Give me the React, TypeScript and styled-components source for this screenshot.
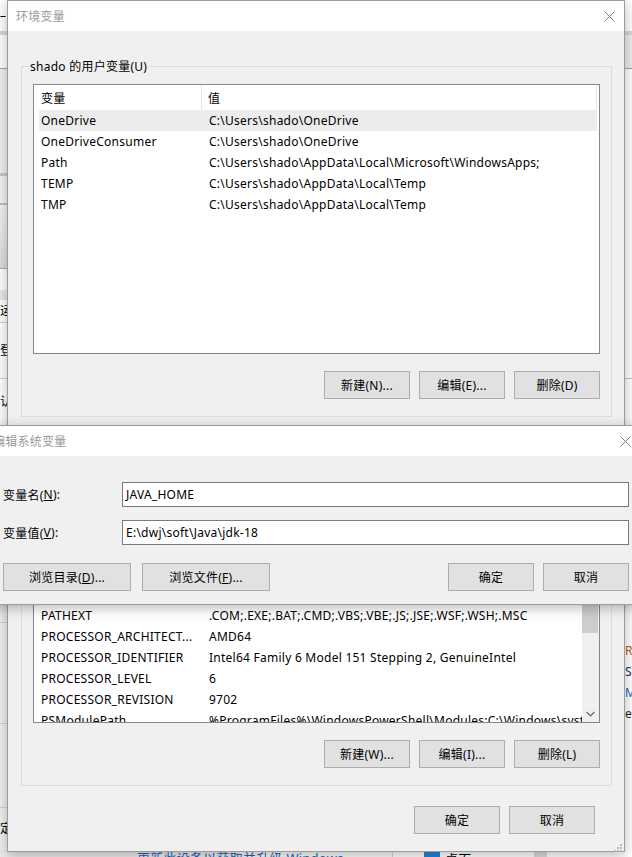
import React from "react";
import styled, { createGlobalStyle } from "styled-components";

const uiFont = `"Segoe UI", "Noto Sans", "Noto Sans CJK SC", sans-serif`;

const GlobalStyle = createGlobalStyle`
  html, body { margin: 0; padding: 0; }
  body {
    font-family: ${uiFont};
    font-size: 12px;
    letter-spacing: 0.25px;
    color: #000;
    background: #fff;
  }
  * { box-sizing: border-box; }
`;

const Desktop = styled.div`
  position: relative;
  width: 632px;
  height: 857px;
  overflow: hidden;
  background: #fff;
`;

/* the window behind both dialogs, only its edges show */
const BackWindow = styled.div`
  position: absolute;
  inset: 0;
  display: grid;
  grid-template-columns: 8px 1fr 8px;
  grid-template-rows: 1fr 8px;
  background: #f0f0f0;
`;

const EdgeColumn = styled.div`
  display: flex;
  flex-direction: column;
  overflow: hidden;
  background: #fff;
`;

const Band = styled.div<{ $h: number; $bg: string; $color?: string; $shift?: number }>`
  flex: 0 0 ${(p) => p.$h}px;
  display: flex;
  align-items: center;
  padding-left: ${(p) => p.$shift ?? 0}px;
  background: ${(p) => p.$bg};
  color: ${(p) => p.$color || "#000"};
  white-space: nowrap;
  font-size: 12px;
  line-height: 1;
`;

const BottomStrip = styled.div`
  grid-column: 1 / -1;
  display: flex;
  overflow: hidden;
  background: #fff;
`;

const StripLink = styled.div`
  flex: 0 0 393px;
  padding: 2px 0 0 137px;
  background: linear-gradient(to right, #ebebeb 240px, #fafafa 240px);
  border-right: 1px solid #d4d4d4;
  color: #1a66c2;
  font-size: 13px;
  line-height: 14px;
  white-space: nowrap;
  overflow: hidden;
`;

const StripNav = styled.div`
  flex: 0 0 141px;
  display: flex;
  gap: 5px;
  padding: 3px 0 0 31px;
  font-size: 13px;
  line-height: 14px;
  white-space: nowrap;
`;

const NavIcon = styled.span`
  flex: 0 0 16px;
  height: 16px;
  background: #1e86dc;
`;

const StripScroll = styled.div`
  flex: 0 0 13px;
  background: #dadada;
`;

/* dialog windows */
const Window = styled.div`
  position: absolute;
  display: flex;
  flex-direction: column;
  background: #f0f0f0;
  border: 1px solid #9c9c9c;
  box-shadow: 0 3px 12px rgba(0, 0, 0, 0.28);
`;

const EnvWindow = styled(Window)`
  left: 7px;
  top: 0;
  width: 618px;
  height: 852px;
`;

const EditWindow = styled(Window)`
  left: -13px;
  top: 425px;
  width: 654px;
  height: 180px;
`;

const TitleBar = styled.div<{ $pad?: number }>`
  flex: 0 0 30px;
  display: flex;
  align-items: center;
  justify-content: space-between;
  padding-left: ${(p) => p.$pad ?? 8}px;
  background: #fff;
`;

const TitleText = styled.span`
  color: #9a9a9a;
  font-size: 12px;
`;

const CloseButton = styled.div`
  width: 29px;
  height: 30px;
  display: flex;
  align-items: center;
  justify-content: center;
`;

const EnvBody = styled.div`
  flex: 1;
  display: flex;
  flex-direction: column;
  padding: 35px 12px 0 13px;
`;

const GroupBox = styled.div<{ $gap?: number }>`
  position: relative;
  display: flex;
  flex-direction: column;
  margin-top: ${(p) => p.$gap ?? 0}px;
  padding: 17px 11px 17px 11px;
  border: 1px solid #dcdcdc;
`;

const GroupLabel = styled.span`
  position: absolute;
  top: -8px;
  left: 7px;
  padding: 0 1px;
  background: #f0f0f0;
  line-height: 15px;
`;

const ListView = styled.div`
  position: relative;
  height: 270px;
  border: 1px solid #828790;
  background: #fff;
  overflow: hidden;
`;

const ListHeader = styled.div`
  display: grid;
  grid-template-columns: 168px 1fr;
  height: 25px;
  margin-right: 2px;
  border-right: 1px solid #e5e5e5;
`;

const HeaderCell = styled.div<{ $divider?: boolean }>`
  display: flex;
  align-items: center;
  padding-left: ${(p) => (p.$divider ? 7 : 6)}px;
  border-right: ${(p) => (p.$divider ? "1px solid #e5e5e5" : "none")};
`;

const Row = styled.div<{ $selected?: boolean }>`
  display: grid;
  grid-template-columns: 163px 1fr;
  height: 21px;
  margin: 0 2px 0 5px;
  background: ${(p) => (p.$selected ? "#ececec" : "transparent")};
  white-space: nowrap;
`;

const Cell = styled.div<{ $value?: boolean }>`
  display: flex;
  align-items: center;
  padding-left: ${(p) => (p.$value ? 7 : 2)}px;
  overflow: hidden;
`;

const ScrollBar = styled.div`
  position: absolute;
  top: 0;
  right: 0;
  bottom: 0;
  width: 17px;
  display: flex;
  flex-direction: column;
  justify-content: space-between;
  background: #f0f0f0;
`;

const ScrollThumb = styled.div`
  margin: 17px 1px 0 0;
  height: 162px;
  background: #cdcdcd;
`;

const ScrollArrow = styled.div`
  height: 17px;
  display: flex;
  align-items: center;
  justify-content: center;
`;

const ButtonRow = styled.div<{ $top: number; $right?: number }>`
  display: flex;
  justify-content: flex-end;
  gap: 9px;
  margin-top: ${(p) => p.$top}px;
  padding-right: ${(p) => p.$right ?? 0}px;
`;

const Button = styled.button<{ $w?: number }>`
  width: ${(p) => p.$w ?? 86}px;
  height: 28px;
  padding: 0;
  border: 1px solid #adadad;
  background: #e1e1e1;
  font-family: ${uiFont};
  font-size: 12px;
  letter-spacing: 0.25px;
  color: #000;
`;

const Grip = styled.div`
  position: absolute;
  right: 2px;
  bottom: 2px;
  width: 10px;
  height: 10px;
`;

const EditBody = styled.div`
  flex: 1;
  display: flex;
  flex-direction: column;
  padding: 26px 11px 0 15px;
`;

const FieldGrid = styled.div`
  display: grid;
  grid-template-columns: 119px 1fr;
  row-gap: 13px;
`;

const FieldLabel = styled.label`
  display: flex;
  align-items: center;
  height: 25px;
`;

const TextBox = styled.div`
  display: flex;
  align-items: center;
  height: 25px;
  padding-left: 3px;
  border: 1px solid #7a7a7a;
  background: #fff;
`;

const EditActions = styled.div`
  display: flex;
  justify-content: space-between;
  margin-top: 18px;
`;

const ActionGroup = styled.div<{ $gap: number }>`
  display: flex;
  gap: ${(p) => p.$gap}px;
`;

const CloseIcon = () => (
  <svg width="11" height="11" viewBox="0 0 11 11">
    <path d="M0.5 0.5 L10.5 10.5 M10.5 0.5 L0.5 10.5" stroke="#7d7d7d" strokeWidth="1" fill="none" />
  </svg>
);

const ChevronDown = () => (
  <svg width="9" height="6" viewBox="0 0 9 6">
    <path d="M0.5 0.8 L4.5 4.8 L8.5 0.8" stroke="#606060" strokeWidth="1.2" fill="none" />
  </svg>
);

const GripDots = () => (
  <svg width="10" height="10" viewBox="0 0 10 10" fill="#b8b8b8">
    <rect x="8" y="2" width="2" height="2" />
    <rect x="5" y="5" width="2" height="2" />
    <rect x="8" y="5" width="2" height="2" />
    <rect x="2" y="8" width="2" height="2" />
    <rect x="5" y="8" width="2" height="2" />
    <rect x="8" y="8" width="2" height="2" />
  </svg>
);

const userVars = [
  ["OneDrive", "C:\\Users\\shado\\OneDrive"],
  ["OneDriveConsumer", "C:\\Users\\shado\\OneDrive"],
  ["Path", "C:\\Users\\shado\\AppData\\Local\\Microsoft\\WindowsApps;"],
  ["TEMP", "C:\\Users\\shado\\AppData\\Local\\Temp"],
  ["TMP", "C:\\Users\\shado\\AppData\\Local\\Temp"],
];

const systemVars = [
  ["ComSpec", "C:\\Windows\\system32\\cmd.exe"],
  ["DriverData", "C:\\Windows\\System32\\Drivers\\DriverData"],
  ["JAVA_HOME", "E:\\dwj\\soft\\Java\\jdk-18"],
  ["NUMBER_OF_PROCESSORS", "20"],
  ["OS", "Windows_NT"],
  ["Path", "C:\\Windows\\system32;C:\\Windows;C:\\Windows\\System32\\Wbem"],
  ["PATHEXT", ".COM;.EXE;.BAT;.CMD;.VBS;.VBE;.JS;.JSE;.WSF;.WSH;.MSC"],
  ["PROCESSOR_ARCHITECT...", "AMD64"],
  ["PROCESSOR_IDENTIFIER", "Intel64 Family 6 Model 151 Stepping 2, GenuineIntel"],
  ["PROCESSOR_LEVEL", "6"],
  ["PROCESSOR_REVISION", "9702"],
  ["PSModulePath", "%ProgramFiles%\\WindowsPowerShell\\Modules;C:\\Windows\\system32\\WindowsPowerShell\\v1.0\\Modules"],
  ["TEMP", "C:\\Windows\\TEMP"],
  ["TMP", "C:\\Windows\\TEMP"],
];

const leftEdge: { h: number; bg: string; text?: string; shift?: number }[] = [
  { h: 31, bg: "#fff", text: "–", shift: 0 },
  { h: 4, bg: "#d6d6d6" },
  { h: 33, bg: "#fff" },
  { h: 1, bg: "#a4a4a4" },
  { h: 104, bg: "#f0f0f0" },
  { h: 3, bg: "#c9c9c9" },
  { h: 27, bg: "#f3f3f3" },
  { h: 2, bg: "#bdbdbd" },
  { h: 63, bg: "linear-gradient(#f4f4f4, #dcdcdc)" },
  { h: 1, bg: "#ababab" },
  { h: 21, bg: "#fff" },
  { h: 10, bg: "#e8e8e8" },
  { h: 22, bg: "#fff", text: "运", shift: -4 },
  { h: 1, bg: "#d0d0d0" },
  { h: 55, bg: "#fff", text: "登", shift: -4 },
  { h: 1, bg: "#d0d0d0" },
  { h: 46, bg: "#fff", text: "认", shift: -4 },
  { h: 197, bg: "#f0f0f0" },
  { h: 1, bg: "#cfcfcf" },
  { h: 100, bg: "#f0f0f0" },
  { h: 1, bg: "#cfcfcf" },
  { h: 83, bg: "#f0f0f0" },
  { h: 1, bg: "#cfcfcf" },
  { h: 41, bg: "#f0f0f0", text: "定", shift: -5 },
];

const rightEdge: { h: number; bg: string; text?: string; color?: string }[] = [
  { h: 31, bg: "#fff" },
  { h: 4, bg: "#d6d6d6" },
  { h: 33, bg: "#ececec" },
  { h: 1, bg: "#9c9c9c" },
  { h: 309, bg: "#fff" },
  { h: 1, bg: "#c2c2c2" },
  { h: 261, bg: "#fff" },
  { h: 21, bg: "#fff", text: "RI", color: "#b35a1f" },
  { h: 21, bg: "#fff", text: "S", color: "#1d2c4f" },
  { h: 21, bg: "#fff", text: "M", color: "#1a66c2" },
  { h: 21, bg: "#fff", text: "e", color: "#222" },
];

function VarList({ rows, selected, scroll }: { rows: string[][]; selected?: number; scroll?: boolean }) {
  return (
    <ListView>
      <ListHeader>
        <HeaderCell $divider>变量</HeaderCell>
        <HeaderCell>值</HeaderCell>
      </ListHeader>
      {rows.map(([name, value], i) => (
        <Row key={name + i} $selected={i === selected}>
          <Cell>{name}</Cell>
          <Cell $value>{value}</Cell>
        </Row>
      ))}
      {scroll ? (
        <ScrollBar>
          <ScrollThumb />
          <ScrollArrow>
            <ChevronDown />
          </ScrollArrow>
        </ScrollBar>
      ) : null}
    </ListView>
  );
}

export default function App() {
  return (
    <>
      <GlobalStyle />
      <Desktop>
        <BackWindow>
          <EdgeColumn>
            {leftEdge.map((b, i) => (
              <Band key={i} $h={b.h} $bg={b.bg} $shift={b.shift}>
                {b.text}
              </Band>
            ))}
          </EdgeColumn>
          <div />
          <EdgeColumn>
            {rightEdge.map((b, i) => (
              <Band key={i} $h={b.h} $bg={b.bg} $color={b.color} $shift={1}>
                {b.text}
              </Band>
            ))}
          </EdgeColumn>
          <BottomStrip>
            <StripLink>更新此设备以获取并升级 Windows</StripLink>
            <StripNav>
              <NavIcon />
              桌面
            </StripNav>
            <StripScroll />
          </BottomStrip>
        </BackWindow>

        <EnvWindow>
          <TitleBar>
            <TitleText>环境变量</TitleText>
            <CloseButton>
              <CloseIcon />
            </CloseButton>
          </TitleBar>
          <EnvBody>
            <GroupBox>
              <GroupLabel>shado 的用户变量(U)</GroupLabel>
              <VarList rows={userVars} selected={0} />
              <ButtonRow $top={17}>
                <Button>新建(N)...</Button>
                <Button>编辑(E)...</Button>
                <Button>删除(D)</Button>
              </ButtonRow>
            </GroupBox>
            <GroupBox $gap={18}>
              <GroupLabel>系统变量(S)</GroupLabel>
              <VarList rows={systemVars} scroll />
              <ButtonRow $top={17}>
                <Button>新建(W)...</Button>
                <Button>编辑(I)...</Button>
                <Button>删除(L)</Button>
              </ButtonRow>
            </GroupBox>
            <ButtonRow $top={20} $right={17}>
              <Button>确定</Button>
              <Button>取消</Button>
            </ButtonRow>
          </EnvBody>
          <Grip>
            <GripDots />
          </Grip>
        </EnvWindow>

        <EditWindow>
          <TitleBar $pad={5}>
            <TitleText>编辑系统变量</TitleText>
            <CloseButton>
              <CloseIcon />
            </CloseButton>
          </TitleBar>
          <EditBody>
            <FieldGrid>
              <FieldLabel>
                变量名(<u>N</u>):
              </FieldLabel>
              <TextBox>JAVA_HOME</TextBox>
              <FieldLabel>
                变量值(<u>V</u>):
              </FieldLabel>
              <TextBox>E:\dwj\soft\Java\jdk-18</TextBox>
            </FieldGrid>
            <EditActions>
              <ActionGroup $gap={11}>
                <Button $w={128}>
                  浏览目录(<u>D</u>)...
                </Button>
                <Button $w={128}>
                  浏览文件(<u>F</u>)...
                </Button>
              </ActionGroup>
              <ActionGroup $gap={9}>
                <Button>确定</Button>
                <Button>取消</Button>
              </ActionGroup>
            </EditActions>
          </EditBody>
        </EditWindow>
      </Desktop>
    </>
  );
}
